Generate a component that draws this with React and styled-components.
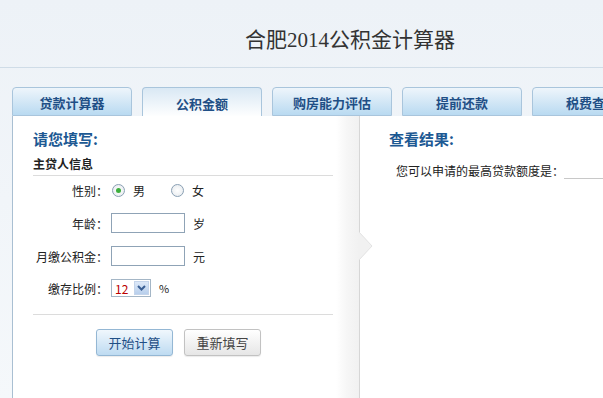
import React from "react";
import styled, { createGlobalStyle } from "styled-components";

const Global = createGlobalStyle`
  html, body { margin: 0; padding: 0; }
  body {
    background: linear-gradient(#edf2f7, #f5f8fb 400px);
    font-family: "Noto Sans CJK SC", "Liberation Sans", sans-serif;
    font-size: 12px;
    color: #222;
    overflow: hidden;
  }
`;

const Page = styled.div`
  width: 603px;
  height: 398px;
  overflow: hidden;
`;

const Header = styled.div`
  height: 67px;
  border-bottom: 1px solid #cfdce7;
`;

const Title = styled.h1`
  margin: 0;
  width: 700px;
  text-align: center;
  padding-top: 27px;
  font-family: "Liberation Serif", "Noto Sans CJK SC", serif;
  font-size: 21px;
  font-weight: normal;
  line-height: 26px;
  color: #333;
`;

const Wrap = styled.div`
  margin-left: 12px;
  width: 680px;
`;

const Tabs = styled.div`
  display: flex;
  gap: 10px;
  margin-top: 19px;
  height: 29px;
`;

const Tab = styled.div`
  flex: 0 0 120px;
  border: 1px solid #a9c5dc;
  border-bottom: ${(p) => (p.active ? "none" : "1px solid #a9c5dc")};
  border-radius: 4px 4px 0 0;
  background: ${(p) =>
    p.active
      ? "linear-gradient(#d9e8f4, #ffffff)"
      : "linear-gradient(#eef5fb, #b9daf1)"};
  color: #1f4f86;
  font-weight: bold;
  font-size: 13px;
  display: flex;
  align-items: center;
  justify-content: center;
  box-sizing: border-box;
  height: ${(p) => (p.active ? "30px" : "29px")};
  padding-top: 1px;
  white-space: nowrap;
  overflow: hidden;
`;

const Panel = styled.div`
  display: flex;
  background: #fff;
  border-left: 1px solid #a9bfd2;
  height: 290px;
`;

const Left = styled.div`
  position: relative;
  width: 347px;
  border-right: 1px solid #d6d6d6;
  padding: 13px 0 0 20px;
  box-sizing: border-box;
  background: linear-gradient(
    to right,
    #fff 0,
    #fff 323px,
    #f6f6f6 334px,
    #f1f1f1 346px
  );
`;

const Arrow = styled.svg`
  position: absolute;
  right: -14px;
  top: 116px;
`;

const Right = styled.div`
  flex: 1;
  padding: 13px 0 0 29px;
`;

const Heading = styled.h2`
  margin: 0;
  font-size: 15px;
  line-height: 20px;
  font-weight: bold;
  color: #1d5993;
`;

const SubHead = styled.div`
  margin-top: 6px;
  width: 300px;
  font-weight: bold;
  font-size: 12px;
  line-height: 17px;
  padding-bottom: 3px;
  border-bottom: 1px solid #dcdcdc;
`;

const Form = styled.div`
  display: flex;
  flex-direction: column;
  gap: 13px;
  margin-top: 4px;
  width: 300px;
  padding-bottom: 17px;
  border-bottom: 1px solid #dcdcdc;
`;

const Row = styled.div`
  display: flex;
  align-items: center;
  height: ${(p) => p.h || 20}px;
`;

const Label = styled.span`
  width: 75px;
  text-align: right;
  color: #222;
  white-space: nowrap;
`;

const Radio = styled.span`
  width: 11px;
  height: 11px;
  border-radius: 50%;
  border: 1px solid #8aa0b4;
  background: radial-gradient(#fff, #e4e8ec);
  display: inline-flex;
  align-items: center;
  justify-content: center;
  margin: 0 8px 0 ${(p) => p.ml}px;
  &::after {
    content: "";
    width: 5px;
    height: 5px;
    border-radius: 50%;
    background: ${(p) => (p.checked ? "#3cae3c" : "transparent")};
  }
`;

const Input = styled.span`
  width: 72px;
  height: 18px;
  border: 1px solid #8fa3b6;
  margin-left: 3px;
  background: #fff;
`;

const Unit = styled.span`
  margin-left: 8px;
  font-size: ${(p) => p.size || 12}px;
`;

const Select = styled.span`
  display: inline-flex;
  align-items: center;
  margin-left: 3px;
  width: 35px;
  height: 16px;
  border: 1px solid #a4b6c6;
  color: #b00;
  font-size: 12px;
  padding-left: 3px;
  box-sizing: content-box;
  justify-content: space-between;
`;

const DropBtn = styled.span`
  width: 15px;
  height: 14px;
  margin-right: 1px;
  background: linear-gradient(#dce8f8, #b8cfec);
  border: 1px solid #c4d4ea;
  box-sizing: border-box;
  display: flex;
  align-items: center;
  justify-content: center;
`;

const Buttons = styled.div`
  display: flex;
  gap: 11px;
  margin: 14px 0 0 63px;
`;

const Button = styled.div`
  width: 77px;
  height: 27px;
  box-sizing: border-box;
  border-radius: 3px;
  border: 1px solid ${(p) => (p.primary ? "#94b7d4" : "#c2c2c2")};
  background: ${(p) =>
    p.primary
      ? "linear-gradient(#f0f7fd, #bedbf1)"
      : "linear-gradient(#ffffff, #e6e6e6)"};
  color: ${(p) => (p.primary ? "#1f4f86" : "#444")};
  font-size: 13px;
  display: flex;
  align-items: center;
  justify-content: center;
  box-shadow: 0 1px 1px rgba(0, 0, 0, 0.08);
`;

const Result = styled.div`
  display: flex;
  align-items: flex-end;
  margin: 13px 0 0 7px;
  white-space: nowrap;
`;

const Blank = styled.span`
  width: 60px;
  border-bottom: 1px solid #c8c8c8;
  margin-left: 0;
  height: 14px;
`;

export default function App() {
  return (
    <Page>
      <Global />
      <Header>
        <Title>合肥2014公积金计算器</Title>
      </Header>
      <Wrap>
        <Tabs>
          <Tab>贷款计算器</Tab>
          <Tab active>公积金额</Tab>
          <Tab>购房能力评估</Tab>
          <Tab>提前还款</Tab>
          <Tab>税费查询</Tab>
        </Tabs>
        <Panel>
          <Left>
            <Heading>请您填写:</Heading>
            <SubHead>主贷人信息</SubHead>
            <Form>
              <Row>
                <Label>性别：</Label>
                <Radio checked ml={4} />
                男
                <Radio ml={26} />
                女
              </Row>
              <Row>
                <Label>年龄：</Label>
                <Input />
                <Unit>岁</Unit>
              </Row>
              <Row>
                <Label>月缴公积金：</Label>
                <Input />
                <Unit>元</Unit>
              </Row>
              <Row h={18}>
                <Label>缴存比例：</Label>
                <Select>
                  12
                  <DropBtn>
                    <svg width="9" height="6" viewBox="0 0 9 6">
                      <path d="M1 1 L4.5 4.5 L8 1" fill="none" stroke="#3a5f94" strokeWidth="2" />
                    </svg>
                  </DropBtn>
                </Select>
                <Unit size={11}>%</Unit>
              </Row>
            </Form>
            <Buttons>
              <Button primary>开始计算</Button>
              <Button>重新填写</Button>
            </Buttons>
            <Arrow width="14" height="28" viewBox="0 0 14 28">
              <path d="M0 0 L13 14 L0 28 Z" fill="#f1f1f1" />
              <path d="M0 0 L13 14 L0 28" fill="none" stroke="#e2e2e2" />
            </Arrow>
          </Left>
          <Right>
            <Heading>查看结果:</Heading>
            <Result>
              您可以申请的最高贷款额度是：
              <Blank />
            </Result>
          </Right>
        </Panel>
      </Wrap>
    </Page>
  );
}
